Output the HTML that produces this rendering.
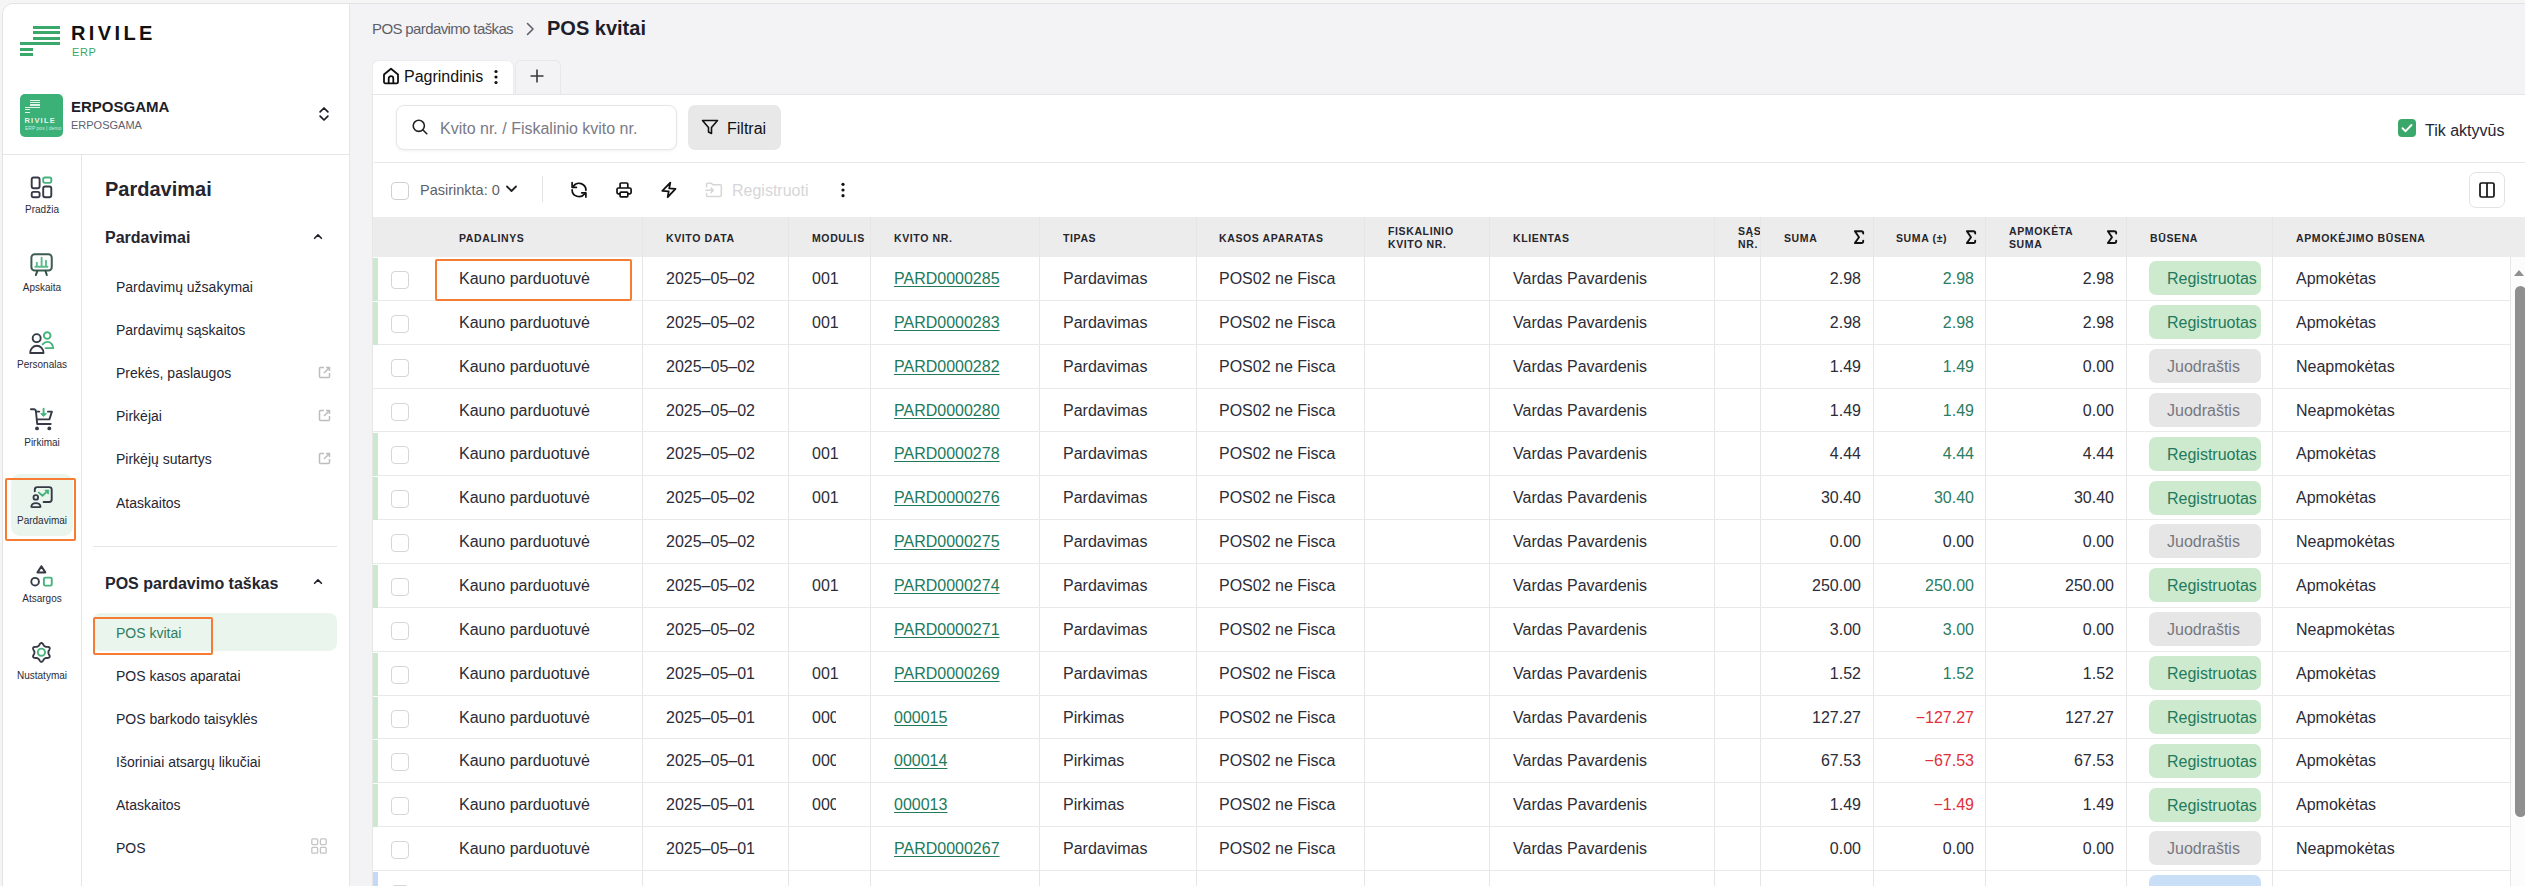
<!DOCTYPE html><html><head><meta charset="utf-8"><style>
*{box-sizing:border-box;margin:0;padding:0}
html,body{width:2525px;height:886px;overflow:hidden;background:#f5f5f5;font-family:"Liberation Sans", sans-serif;color:#2c2c37}
.a{position:absolute;white-space:nowrap}
#app{position:absolute;left:2px;top:3px;width:2600px;height:900px;border:1px solid #e3e3e3;border-top-left-radius:11px;background:#f3f3f6;overflow:hidden}
#side{position:absolute;left:3px;top:4px;width:347px;height:900px;background:#fff;border-right:1px solid #e6e6e6;border-top-left-radius:10px}
.st{position:absolute;background:#3aa86b;height:2.8px}
.rl{position:absolute;font-size:10px;color:#2b2b38;text-align:center;width:78px;left:3px;line-height:12px}
.ri{position:absolute;left:30px;width:23px;height:23px}
.sub{position:absolute;font-size:14px;color:#262633;left:116px;line-height:16px;white-space:nowrap}
.ext{position:absolute;left:318px;width:13px;height:13px}
.ob{position:absolute;border:2.8px solid #f67c34;border-radius:2px}
#card{position:absolute;left:372px;top:94px;width:2200px;height:800px;background:#fff;border-left:1px solid #e6e6e6;border-top:1px solid #e6e6e6}
.hd{position:absolute;font-size:10.5px;font-weight:bold;letter-spacing:0.62px;color:#26262c;line-height:13px;white-space:nowrap}
.vl{position:absolute;width:1px;background:#e6e6e6}
.hl{position:absolute;height:1px;background:#e9e9e9}
.c{position:absolute;font-size:16px;line-height:18px;white-space:nowrap;color:#2c2c37}
.r{text-align:right}
.lk{color:#217a5b;text-decoration:underline;text-underline-offset:2px}
.neg{color:#e0303a}
.pos{color:#2b7d62}
.cb{position:absolute;left:391px;width:18px;height:18px;border:1px solid #d6d6d6;border-radius:4px;background:#fff}
.bd{position:absolute;left:2149px;width:112px;height:34px;border-radius:7px;font-size:16px;line-height:35px;padding-left:18px;white-space:nowrap;overflow:hidden}
.bg{background:#cdeace;color:#23795b}
.bj{background:#e6e6e6;color:#777780}
.bb{background:#c9def7}
.ind{position:absolute;left:373px;width:5px}
.sig{position:absolute;font-size:17px;font-family:"Liberation Serif",serif;color:#1f1f28}
</style></head><body>
<div id="app"></div>
<div id="side"></div>
<div class="st" style="left:33px;top:26px;width:26.5px"></div>
<div class="st" style="left:33px;top:31.4px;width:26.5px"></div>
<div class="st" style="left:33px;top:36.9px;width:26.5px"></div>
<div class="st" style="left:20px;top:42.1px;width:39.5px"></div>
<div class="st" style="left:20px;top:47.9px;width:13px"></div>
<div class="st" style="left:20px;top:53px;width:13px"></div>
<div class="a" style="left:71px;top:22px;font-size:20px;font-weight:bold;letter-spacing:3.4px;color:#111;line-height:22px">RIVILE</div>
<div class="a" style="left:72px;top:46px;font-size:11px;letter-spacing:0.6px;color:#3aa86b;line-height:13px">ERP</div>
<div class="a" style="left:20px;top:94px;width:43px;height:43px;border-radius:5px;background:#3bb077"></div>
<div class="a" style="left:30.2px;top:100.1px;width:9.7px;height:1.2px;background:rgba(255,255,255,0.85)"></div>
<div class="a" style="left:30.2px;top:102.2px;width:9.7px;height:1.2px;background:rgba(255,255,255,0.85)"></div>
<div class="a" style="left:30.2px;top:104.4px;width:9.7px;height:1.2px;background:rgba(255,255,255,0.85)"></div>
<div class="a" style="left:25.3px;top:106.9px;width:14.6px;height:1.2px;background:rgba(255,255,255,0.85)"></div>
<div class="a" style="left:25.3px;top:109.2px;width:4.7px;height:1.2px;background:rgba(255,255,255,0.85)"></div>
<div class="a" style="left:25.3px;top:111.5px;width:4.7px;height:1.2px;background:rgba(255,255,255,0.85)"></div>
<div class="a" style="left:24.5px;top:115.5px;font-size:7.5px;font-weight:bold;letter-spacing:1.2px;color:rgba(255,255,255,0.9);line-height:9px">RIVILE</div>
<div class="a" style="left:25px;top:125px;font-size:5px;color:rgba(255,255,255,0.75);line-height:7px;letter-spacing:0px">ERP pos | demo</div>
<div class="a" style="left:71px;top:98px;font-size:15px;font-weight:bold;color:#1e1e28;line-height:17px">ERPOSGAMA</div>
<div class="a" style="left:71px;top:119px;font-size:11px;color:#5e5e6e;line-height:13px">ERPOSGAMA</div>
<svg class="a" style="left:318px;top:106px" width="12" height="16" viewBox="0 0 12 16"><path d="M2.1 5.9 L6 2 L9.9 5.9 M2.1 10.1 L6 14 L9.9 10.1" fill="none" stroke="#1c1c22" stroke-width="1.7" stroke-linecap="round" stroke-linejoin="round"/></svg>
<div class="a" style="left:3px;top:154px;width:346px;height:1px;background:#e6e6e6"></div>
<div class="a" style="left:81px;top:155px;width:1px;height:740px;background:#e6e6e6"></div>
<div class="rl" style="top:204.0px">Pradžia</div>
<div class="rl" style="top:281.7px">Apskaita</div>
<div class="rl" style="top:359.4px">Personalas</div>
<div class="rl" style="top:437.1px">Pirkimai</div>
<div class="a" style="left:11px;top:474px;width:62px;height:62px;border-radius:9px;background:#eaf5ee"></div>
<div class="rl" style="top:514.8px">Pardavimai</div>
<div class="rl" style="top:592.5px">Atsargos</div>
<div class="rl" style="top:670.2px">Nustatymai</div>
<svg class="a" style="left:26px;top:172px" width="30" height="30" viewBox="0 0 30 30"><rect x="5.7" y="5.5" width="7.9" height="10.8" rx="2" stroke="#363a46" stroke-width="1.9" fill="none"/><rect x="5.7" y="19.9" width="7.9" height="5.4" rx="1.8" stroke="#363a46" stroke-width="1.9" fill="none"/><rect x="17.2" y="5.5" width="8.1" height="5.4" rx="1.8" stroke="#45b37b" stroke-width="1.9" fill="none"/><rect x="17.2" y="14.5" width="8.1" height="10.8" rx="2" stroke="#363a46" stroke-width="1.9" fill="none"/></svg>
<svg class="a" style="left:26px;top:249px" width="30" height="30" viewBox="0 0 30 30"><rect x="5.4" y="5.2" width="20.35" height="16.3" rx="3.3" stroke="#3d5c50" stroke-width="2" fill="none"/><path d="M11.2 22.3 L9.9 26 M19.6 22.3 L20.8 26" stroke="#2f5244" stroke-width="2" stroke-linecap="round"/><path d="M10.8 17.6 V13.6 M15.6 17.6 V8.6 M20 17.6 V11.6 M9.3 17.7 H21.5" stroke="#5bbd8c" stroke-width="1.9" stroke-linecap="round" fill="none"/></svg>
<svg class="a" style="left:26px;top:328px" width="30" height="30" viewBox="0 0 30 30"><circle cx="10.67" cy="10.16" r="4" stroke="#363a46" stroke-width="1.9" fill="none"/><path d="M4.2 25 A6.65 7.2 0 0 1 17.5 25 Z" stroke="#363a46" stroke-width="1.9" fill="none" stroke-linejoin="round"/><circle cx="21.2" cy="7.6" r="3.3" stroke="#45b37b" stroke-width="1.9" fill="none"/><path d="M16.6 16.3 C18 14.6 19.8 13.9 21.3 13.9 C24.5 13.9 27.1 16.5 27.1 20.1 H19.6" stroke="#45b37b" stroke-width="1.9" fill="none" stroke-linecap="round"/></svg>
<svg class="a" style="left:26px;top:404px" width="30" height="30" viewBox="0 0 30 30"><path d="M4.9 5.25 H8.2 Q9.6 5.25 9.9 7 L11.2 20 H24.7" stroke="#363a46" stroke-width="1.9" fill="none" stroke-linecap="round" stroke-linejoin="round"/><path d="M10 7.6 H13.3 M21.9 7.6 H25.9 L23.4 15.4 H11" stroke="#363a46" stroke-width="1.9" fill="none" stroke-linecap="round" stroke-linejoin="round"/><circle cx="11" cy="24.4" r="1.9" fill="#363a46"/><circle cx="23.3" cy="24.4" r="1.9" fill="#363a46"/><path d="M17.6 4.8 V10" stroke="#45b37b" stroke-width="1.9" stroke-linecap="round"/><path d="M14.7 9.6 H20.6 L17.6 12.6 Z" fill="#45b37b" stroke="#45b37b" stroke-width="0.8" stroke-linejoin="round"/></svg>
<svg class="a" style="left:26px;top:482px" width="30" height="30" viewBox="0 0 30 30"><path d="M8.8 9.3 V7.6 A2.5 2.5 0 0 1 11.3 5.1 H23.2 A2.5 2.5 0 0 1 25.7 7.6 V17.5 A2.5 2.5 0 0 1 23.2 20 H17.6" stroke="#363a46" stroke-width="1.9" fill="none" stroke-linecap="round"/><circle cx="9.8" cy="15.4" r="2.3" stroke="#363a46" stroke-width="1.8" fill="none"/><path d="M5.9 25.1 H13.9 Q14.6 25.1 14.5 24.4 C14.1 22.2 12.2 21.2 9.9 21.2 C7.6 21.2 5.7 22.2 5.3 24.4 Q5.2 25.1 5.9 25.1 Z" stroke="#363a46" stroke-width="1.8" fill="none"/><path d="M12.9 10.6 L16.5 13.8 L20.6 9.9" stroke="#45b37b" stroke-width="1.9" stroke-linecap="round" stroke-linejoin="round" fill="none"/><path d="M18.9 8.1 H22.8 L22.3 12.2 Z" fill="#45b37b" stroke="#45b37b" stroke-width="0.8" stroke-linejoin="round"/></svg>
<svg class="a" style="left:26px;top:560px" width="30" height="30" viewBox="0 0 30 30"><path d="M15.4 6.2 L19.3 12.4 H11.5 Z" stroke="#363a46" stroke-width="2" fill="none" stroke-linejoin="round"/><circle cx="9.1" cy="21.7" r="3.8" stroke="#363a46" stroke-width="1.9" fill="none"/><rect x="17.9" y="17.6" width="7.85" height="8" rx="1.3" stroke="#45b37b" stroke-width="1.9" fill="none"/></svg>
<svg class="a" style="left:26px;top:637px" width="30" height="30" viewBox="0 0 30 30"><path d="M15.40 6.00 L15.73 6.04 L16.04 6.18 L16.35 6.39 L16.63 6.66 L16.89 6.97 L17.12 7.31 L17.33 7.65 L17.53 7.98 L17.71 8.28 L17.90 8.54 L18.08 8.76 L18.28 8.94 L18.48 9.09 L18.69 9.22 L18.90 9.34 L19.11 9.46 L19.33 9.58 L19.56 9.68 L19.81 9.76 L20.09 9.81 L20.41 9.84 L20.76 9.85 L21.14 9.85 L21.55 9.87 L21.96 9.90 L22.36 9.96 L22.73 10.07 L23.07 10.23 L23.34 10.44 L23.54 10.70 L23.67 11.01 L23.71 11.35 L23.68 11.71 L23.59 12.09 L23.44 12.47 L23.27 12.84 L23.08 13.20 L22.89 13.53 L22.72 13.84 L22.59 14.13 L22.49 14.40 L22.43 14.66 L22.40 14.91 L22.40 15.16 L22.40 15.40 L22.40 15.64 L22.40 15.89 L22.43 16.14 L22.49 16.40 L22.59 16.67 L22.72 16.96 L22.89 17.27 L23.08 17.60 L23.27 17.96 L23.44 18.33 L23.59 18.71 L23.68 19.09 L23.71 19.45 L23.67 19.79 L23.54 20.10 L23.34 20.36 L23.07 20.57 L22.73 20.73 L22.36 20.84 L21.96 20.90 L21.55 20.93 L21.14 20.95 L20.76 20.95 L20.41 20.96 L20.09 20.99 L19.81 21.04 L19.56 21.12 L19.33 21.22 L19.11 21.34 L18.90 21.46 L18.69 21.58 L18.48 21.71 L18.28 21.86 L18.08 22.04 L17.90 22.26 L17.71 22.52 L17.53 22.82 L17.33 23.15 L17.12 23.49 L16.89 23.83 L16.63 24.14 L16.35 24.41 L16.04 24.62 L15.73 24.76 L15.40 24.80 L15.07 24.76 L14.76 24.62 L14.45 24.41 L14.17 24.14 L13.91 23.83 L13.68 23.49 L13.47 23.15 L13.27 22.82 L13.09 22.52 L12.90 22.26 L12.72 22.04 L12.52 21.86 L12.32 21.71 L12.11 21.58 L11.90 21.46 L11.69 21.34 L11.47 21.22 L11.24 21.12 L10.99 21.04 L10.71 20.99 L10.39 20.96 L10.04 20.95 L9.66 20.95 L9.25 20.93 L8.84 20.90 L8.44 20.84 L8.07 20.73 L7.73 20.57 L7.46 20.36 L7.26 20.10 L7.13 19.79 L7.09 19.45 L7.12 19.09 L7.21 18.71 L7.36 18.33 L7.53 17.96 L7.72 17.60 L7.91 17.27 L8.08 16.96 L8.21 16.67 L8.31 16.40 L8.37 16.14 L8.40 15.89 L8.40 15.64 L8.40 15.40 L8.40 15.16 L8.40 14.91 L8.37 14.66 L8.31 14.40 L8.21 14.13 L8.08 13.84 L7.91 13.53 L7.72 13.20 L7.53 12.84 L7.36 12.47 L7.21 12.09 L7.12 11.71 L7.09 11.35 L7.13 11.01 L7.26 10.70 L7.46 10.44 L7.73 10.23 L8.07 10.07 L8.44 9.96 L8.84 9.90 L9.25 9.87 L9.66 9.85 L10.04 9.85 L10.39 9.84 L10.71 9.81 L10.99 9.76 L11.24 9.68 L11.47 9.58 L11.69 9.46 L11.90 9.34 L12.11 9.22 L12.32 9.09 L12.52 8.94 L12.72 8.76 L12.90 8.54 L13.09 8.28 L13.27 7.98 L13.47 7.65 L13.68 7.31 L13.91 6.97 L14.17 6.66 L14.45 6.39 L14.76 6.18 L15.07 6.04 L15.40 6.00 Z" stroke="#363a46" stroke-width="1.9" fill="none" stroke-linejoin="round"/><circle cx="15.4" cy="15.2" r="3.6" stroke="#45b37b" stroke-width="1.9" fill="none"/></svg>
<div class="ob" style="left:5px;top:478px;width:71px;height:63px"></div>
<div class="a" style="left:105px;top:178px;font-size:20px;font-weight:bold;color:#25252f;line-height:22px">Pardavimai</div>
<div class="a" style="left:105px;top:229px;font-size:16px;font-weight:bold;color:#25252f;line-height:18px">Pardavimai</div>
<svg class="a" style="left:313px;top:233px" width="10" height="7" viewBox="0 0 10 7"><path d="M1.6 5.3 L5 1.9 L8.4 5.3" fill="none" stroke="#1e1e28" stroke-width="1.6" stroke-linecap="round" stroke-linejoin="round"/></svg>
<div class="sub" style="top:279.09999999999997px">Pardavimų užsakymai</div>
<div class="sub" style="top:322.17999999999995px">Pardavimų sąskaitos</div>
<div class="sub" style="top:365.25999999999993px">Prekės, paslaugos</div>
<svg class="ext" style="top:366.05999999999995px" viewBox="0 0 13 13"><path d="M6 1.5 H2.5 A1 1 0 0 0 1.5 2.5 V10.5 A1 1 0 0 0 2.5 11.5 H10.5 A1 1 0 0 0 11.5 10.5 V7" fill="none" stroke="#bdbdbd" stroke-width="1.5"/><path d="M6 7 L11.5 1.5 M8 1.5 H11.5 V5" fill="none" stroke="#bdbdbd" stroke-width="1.5"/></svg>
<div class="sub" style="top:408.34px">Pirkėjai</div>
<svg class="ext" style="top:409.14px" viewBox="0 0 13 13"><path d="M6 1.5 H2.5 A1 1 0 0 0 1.5 2.5 V10.5 A1 1 0 0 0 2.5 11.5 H10.5 A1 1 0 0 0 11.5 10.5 V7" fill="none" stroke="#bdbdbd" stroke-width="1.5"/><path d="M6 7 L11.5 1.5 M8 1.5 H11.5 V5" fill="none" stroke="#bdbdbd" stroke-width="1.5"/></svg>
<div class="sub" style="top:451.41999999999996px">Pirkėjų sutartys</div>
<svg class="ext" style="top:452.21999999999997px" viewBox="0 0 13 13"><path d="M6 1.5 H2.5 A1 1 0 0 0 1.5 2.5 V10.5 A1 1 0 0 0 2.5 11.5 H10.5 A1 1 0 0 0 11.5 10.5 V7" fill="none" stroke="#bdbdbd" stroke-width="1.5"/><path d="M6 7 L11.5 1.5 M8 1.5 H11.5 V5" fill="none" stroke="#bdbdbd" stroke-width="1.5"/></svg>
<div class="sub" style="top:494.49999999999994px">Ataskaitos</div>
<div class="a" style="left:93px;top:546px;width:244px;height:1px;background:#e6e6e6"></div>
<div class="a" style="left:105px;top:575px;font-size:16px;font-weight:bold;color:#25252f;line-height:18px">POS pardavimo taškas</div>
<svg class="a" style="left:313px;top:578px" width="10" height="7" viewBox="0 0 10 7"><path d="M1.6 5.3 L5 1.9 L8.4 5.3" fill="none" stroke="#1e1e28" stroke-width="1.6" stroke-linecap="round" stroke-linejoin="round"/></svg>
<div class="a" style="left:93px;top:613px;width:244px;height:38px;border-radius:8px;background:#eaf5ee"></div>
<div class="sub" style="top:624.6px;color:#2e7d5e">POS kvitai</div>
<div class="sub" style="top:667.6px">POS kasos aparatai</div>
<div class="sub" style="top:710.6px">POS barkodo taisyklės</div>
<div class="sub" style="top:753.6px">Išoriniai atsargų likučiai</div>
<div class="sub" style="top:796.6px">Ataskaitos</div>
<div class="sub" style="top:839.6px">POS</div>
<svg class="a" style="left:311px;top:838px" width="16" height="16" viewBox="0 0 16 16"><g fill="none" stroke="#c4c4c4" stroke-width="1.3"><rect x="0.8" y="0.8" width="5.8" height="5.8" rx="1"/><rect x="9.4" y="0.8" width="5.8" height="5.8" rx="1"/><rect x="0.8" y="9.4" width="5.8" height="5.8" rx="1"/><rect x="9.4" y="9.4" width="5.8" height="5.8" rx="1"/></g></svg>
<div class="ob" style="left:93px;top:617px;width:120px;height:38px"></div>
<div class="a" style="left:372px;top:20px;font-size:15px;letter-spacing:-0.62px;color:#5f5f6a;line-height:17px">POS pardavimo taškas</div>
<svg class="a" style="left:525px;top:22px" width="10" height="14" viewBox="0 0 10 14"><path d="M2.5 1.5 L8 7 L2.5 12.5" fill="none" stroke="#5f5f6a" stroke-width="1.6" stroke-linecap="round" stroke-linejoin="round"/></svg>
<div class="a" style="left:547px;top:17px;font-size:20px;font-weight:bold;color:#1e1e28;line-height:23px">POS kvitai</div>
<div class="a" style="left:372px;top:60px;width:142px;height:35px;background:#fff;border-radius:7px 7px 0 0;border:1px solid #ececec;border-bottom:none"></div>
<div class="a" style="left:515px;top:60px;width:46px;height:35px;background:#f3f3f6;border-radius:6px 6px 0 0;border:1px solid #e8e8ea;border-bottom:none"></div>
<svg class="a" style="left:382px;top:67px" width="18" height="18" viewBox="0 0 18 18"><path d="M2 7.5 L9 1.8 L16 7.5 V15 A1.3 1.3 0 0 1 14.7 16.3 H3.3 A1.3 1.3 0 0 1 2 15 Z" fill="none" stroke="#111" stroke-width="1.8" stroke-linejoin="round"/><path d="M6.7 16.3 V11.5 A2.3 2.3 0 0 1 11.3 11.5 V16.3" fill="none" stroke="#111" stroke-width="1.8"/></svg>
<div class="a" style="left:404px;top:68px;font-size:16px;color:#111;line-height:18px">Pagrindinis</div>
<svg class="a" style="left:493px;top:69px" width="6" height="16" viewBox="0 0 6 16"><circle cx="3" cy="2.5" r="1.6" fill="#111"/><circle cx="3" cy="8" r="1.6" fill="#111"/><circle cx="3" cy="13.5" r="1.6" fill="#111"/></svg>
<svg class="a" style="left:530px;top:69px" width="14" height="14" viewBox="0 0 14 14"><path d="M7 0.5 V13.5 M0.5 7 H13.5" stroke="#3a3a3a" stroke-width="1.6"/></svg>
<div id="card"></div>
<div class="a" style="left:396px;top:105px;width:281px;height:45px;border:1px solid #e6e6e6;border-radius:8px;background:#fff;box-shadow:0 1px 3px rgba(0,0,0,0.06)"></div>
<svg class="a" style="left:412px;top:119px" width="16" height="16" viewBox="0 0 16 16"><circle cx="6.8" cy="6.8" r="5.6" fill="none" stroke="#222" stroke-width="1.6"/><path d="M11 11 L14.8 14.8" stroke="#222" stroke-width="1.6" stroke-linecap="round"/></svg>
<div class="a" style="left:440px;top:120px;font-size:16px;color:#7a7a86;line-height:18px">Kvito nr. / Fiskalinio kvito nr.</div>
<div class="a" style="left:688px;top:105px;width:93px;height:45px;border-radius:7px;background:#e8e8e8"></div>
<svg class="a" style="left:701px;top:119px" width="18" height="16" viewBox="0 0 18 16"><path d="M1.5 1.5 H16.5 L10.5 8.5 V14.5 L7.5 13 V8.5 Z" fill="none" stroke="#111" stroke-width="1.6" stroke-linejoin="round"/></svg>
<div class="a" style="left:727px;top:120px;font-size:16px;color:#111;line-height:18px">Filtrai</div>
<div class="a" style="left:2398px;top:119px;width:18px;height:18px;border-radius:4px;background:#3aa86b"></div>
<svg class="a" style="left:2398px;top:119px" width="18" height="18" viewBox="0 0 18 18"><path d="M4.5 9.2 L7.6 12.2 L13.5 6" fill="none" stroke="#fff" stroke-width="1.9" stroke-linecap="round" stroke-linejoin="round"/></svg>
<div class="a" style="left:2425px;top:122px;font-size:16px;color:#262633;line-height:18px">Tik aktyvūs</div>
<div class="a" style="left:374px;top:162px;width:2200px;height:1px;background:#e8e8e8"></div>
<div class="cb" style="top:182px;border-color:#d0d0d0"></div>
<div class="a" style="left:420px;top:182px;font-size:14.5px;color:#5f5f6a;line-height:17px">Pasirinkta: 0</div>
<svg class="a" style="left:505px;top:184px" width="13" height="10" viewBox="0 0 13 10"><path d="M2 2.5 L6.5 7 L11 2.5" fill="none" stroke="#222" stroke-width="1.8" stroke-linecap="round" stroke-linejoin="round"/></svg>
<div class="a" style="left:542px;top:176px;width:1px;height:26px;background:#e3e3e3"></div>
<svg class="a" style="left:570px;top:181px" width="18" height="18" viewBox="0 0 18 18"><path d="M3.4 5.2 A6.9 6.9 0 0 1 15.9 9.3 M2.1 8.9 A6.9 6.9 0 0 0 14.5 12.9" fill="none" stroke="#111" stroke-width="1.7" stroke-linecap="round"/><path d="M2.1 1.6 V6.3 H6.4 M11.7 11.8 H15.9 V16.1" fill="none" stroke="#111" stroke-width="1.7" stroke-linecap="round" stroke-linejoin="round"/></svg>
<svg class="a" style="left:615px;top:181px" width="18" height="18" viewBox="0 0 18 18"><path d="M5.1 7 V3 A1 1 0 0 1 6.1 2 H11.8 A1 1 0 0 1 12.8 3 V7" fill="none" stroke="#111" stroke-width="1.7"/><path d="M5.1 12.8 H3.5 A1.5 1.5 0 0 1 2 11.3 V8.5 A1.5 1.5 0 0 1 3.5 7 H14.6 A1.5 1.5 0 0 1 16.1 8.5 V11.3 A1.5 1.5 0 0 1 14.6 12.8 H12.8" fill="none" stroke="#111" stroke-width="1.7" stroke-linejoin="round"/><rect x="5.1" y="11.1" width="7.7" height="4.8" rx="0.8" fill="none" stroke="#111" stroke-width="1.7"/></svg>
<svg class="a" style="left:660px;top:181px" width="18" height="18" viewBox="0 0 18 18"><path d="M10.3 1.6 L9.2 7.3 L15.5 7.8 L7.7 16.2 L8.7 10.3 L2.3 9.8 Z" fill="none" stroke="#111" stroke-width="1.8" stroke-linejoin="round"/></svg>
<svg class="a" style="left:705px;top:182px" width="18" height="16" viewBox="0 0 18 16"><path d="M1.6 5.5 V2.2 A1 1 0 0 1 2.6 1.2 H6.3 L7.8 2.8 H15.3 A1 1 0 0 1 16.3 3.8 V13.6 A1 1 0 0 1 15.3 14.6 H2.6 A1 1 0 0 1 1.6 13.6 V11" fill="none" stroke="#d6d6d6" stroke-width="1.5"/><path d="M1 8.3 H8.3 M6 6 L8.3 8.3 L6 10.6" fill="none" stroke="#d6d6d6" stroke-width="1.5" stroke-linecap="round" stroke-linejoin="round"/></svg>
<div class="a" style="left:732px;top:182px;font-size:16px;color:#d6d6d8;line-height:18px">Registruoti</div>
<svg class="a" style="left:840px;top:182px" width="6" height="16" viewBox="0 0 6 16"><circle cx="3" cy="2.3" r="1.6" fill="#111"/><circle cx="3" cy="8" r="1.6" fill="#111"/><circle cx="3" cy="13.7" r="1.6" fill="#111"/></svg>
<div class="a" style="left:2469px;top:172px;width:36px;height:36px;border:1px solid #e3e3e3;border-radius:7px;background:#fff"></div>
<svg class="a" style="left:2479px;top:182px" width="16" height="16" viewBox="0 0 16 16"><rect x="1" y="1" width="14" height="14" rx="1.5" fill="none" stroke="#111" stroke-width="1.7"/><path d="M8 1 V15" stroke="#111" stroke-width="1.7"/></svg>
<div class="a" style="left:373px;top:217px;width:2200px;height:40px;background:#ececec"></div>
<div class="vl" style="left:642px;top:217px;height:700px"></div>
<div class="vl" style="left:788px;top:217px;height:700px"></div>
<div class="vl" style="left:870px;top:217px;height:700px"></div>
<div class="vl" style="left:1039px;top:217px;height:700px"></div>
<div class="vl" style="left:1196px;top:217px;height:700px"></div>
<div class="vl" style="left:1364px;top:217px;height:700px"></div>
<div class="vl" style="left:1489px;top:217px;height:700px"></div>
<div class="vl" style="left:1714px;top:217px;height:700px"></div>
<div class="vl" style="left:1760px;top:217px;height:700px"></div>
<div class="vl" style="left:1873px;top:217px;height:700px"></div>
<div class="vl" style="left:1985px;top:217px;height:700px"></div>
<div class="vl" style="left:2126px;top:217px;height:700px"></div>
<div class="vl" style="left:2272px;top:217px;height:700px"></div>
<div class="vl" style="left:2510px;top:257px;height:700px"></div>
<div class="hd" style="left:459px;top:232px">PADALINYS</div>
<div class="hd" style="left:666px;top:232px">KVITO DATA</div>
<div class="hd" style="left:812px;top:232px">MODULIS</div>
<div class="hd" style="left:894px;top:232px">KVITO NR.</div>
<div class="hd" style="left:1063px;top:232px">TIPAS</div>
<div class="hd" style="left:1219px;top:232px">KASOS APARATAS</div>
<div class="hd" style="left:1388px;top:225px;line-height:13px">FISKALINIO<br>KVITO NR.</div>
<div class="hd" style="left:1513px;top:232px">KLIENTAS</div>
<div class="a" style="left:1715px;top:225px;width:45px;height:30px;overflow:hidden"><div class="hd" style="left:23px;top:0px;text-align:left">SĄS<br>NR.</div></div>
<div class="hd" style="left:1784px;top:232px">SUMA</div>
<div class="hd" style="left:1896px;top:232px">SUMA (±)</div>
<div class="hd" style="left:2009px;top:225px">APMOKĖTA<br>SUMA</div>
<div class="hd" style="left:2150px;top:232px">BŪSENA</div>
<div class="hd" style="left:2296px;top:232px">APMOKĖJIMO BŪSENA</div>
<svg class="a" style="left:1853px;top:229.5px" width="12" height="15" viewBox="0 0 12 15"><path d="M10.2 3.6 V3 Q10.2 1.2 8.4 1.2 H1.9 L6 7.2 L1.9 13 H8.4 Q10.2 13 10.2 11.2 V10.6" fill="none" stroke="#111" stroke-width="1.9" stroke-linecap="round" stroke-linejoin="round"/></svg>
<svg class="a" style="left:1965px;top:229.5px" width="12" height="15" viewBox="0 0 12 15"><path d="M10.2 3.6 V3 Q10.2 1.2 8.4 1.2 H1.9 L6 7.2 L1.9 13 H8.4 Q10.2 13 10.2 11.2 V10.6" fill="none" stroke="#111" stroke-width="1.9" stroke-linecap="round" stroke-linejoin="round"/></svg>
<svg class="a" style="left:2106px;top:229.5px" width="12" height="15" viewBox="0 0 12 15"><path d="M10.2 3.6 V3 Q10.2 1.2 8.4 1.2 H1.9 L6 7.2 L1.9 13 H8.4 Q10.2 13 10.2 11.2 V10.6" fill="none" stroke="#111" stroke-width="1.9" stroke-linecap="round" stroke-linejoin="round"/></svg>
<div class="hl" style="left:373px;top:299.86px;width:2137px"></div>
<div class="ind" style="top:258.00px;height:42.86px;background:#cce9cf"></div>
<div class="cb" style="top:270.93px"></div>
<div class="c" style="left:459px;top:269.93px">Kauno parduotuvė</div>
<div class="c" style="left:666px;top:269.93px">2025–05–02</div>
<div class="c" style="left:812px;top:269.93px">001</div>
<div class="c lk" style="left:894px;top:269.93px">PARD0000285</div>
<div class="c" style="left:1063px;top:269.93px">Pardavimas</div>
<div class="c" style="left:1219px;top:269.93px">POS02 ne Fisca</div>
<div class="c" style="left:1513px;top:269.93px">Vardas Pavardenis</div>
<div class="c r" style="left:1761px;width:100px;top:269.93px">2.98</div>
<div class="c r pos" style="left:1874px;width:100px;top:269.93px">2.98</div>
<div class="c r" style="left:2014px;width:100px;top:269.93px">2.98</div>
<div class="c" style="left:2296px;top:269.93px">Apmokėtas</div>
<div class="bd bg" style="top:261.20px">Registruotas</div>
<div class="hl" style="left:373px;top:343.72px;width:2137px"></div>
<div class="ind" style="top:301.86px;height:42.86px;background:#cce9cf"></div>
<div class="cb" style="top:314.79px"></div>
<div class="c" style="left:459px;top:313.79px">Kauno parduotuvė</div>
<div class="c" style="left:666px;top:313.79px">2025–05–02</div>
<div class="c" style="left:812px;top:313.79px">001</div>
<div class="c lk" style="left:894px;top:313.79px">PARD0000283</div>
<div class="c" style="left:1063px;top:313.79px">Pardavimas</div>
<div class="c" style="left:1219px;top:313.79px">POS02 ne Fisca</div>
<div class="c" style="left:1513px;top:313.79px">Vardas Pavardenis</div>
<div class="c r" style="left:1761px;width:100px;top:313.79px">2.98</div>
<div class="c r pos" style="left:1874px;width:100px;top:313.79px">2.98</div>
<div class="c r" style="left:2014px;width:100px;top:313.79px">2.98</div>
<div class="c" style="left:2296px;top:313.79px">Apmokėtas</div>
<div class="bd bg" style="top:305.06px">Registruotas</div>
<div class="hl" style="left:373px;top:387.58px;width:2137px"></div>
<div class="cb" style="top:358.65px"></div>
<div class="c" style="left:459px;top:357.65px">Kauno parduotuvė</div>
<div class="c" style="left:666px;top:357.65px">2025–05–02</div>
<div class="c lk" style="left:894px;top:357.65px">PARD0000282</div>
<div class="c" style="left:1063px;top:357.65px">Pardavimas</div>
<div class="c" style="left:1219px;top:357.65px">POS02 ne Fisca</div>
<div class="c" style="left:1513px;top:357.65px">Vardas Pavardenis</div>
<div class="c r" style="left:1761px;width:100px;top:357.65px">1.49</div>
<div class="c r pos" style="left:1874px;width:100px;top:357.65px">1.49</div>
<div class="c r" style="left:2014px;width:100px;top:357.65px">0.00</div>
<div class="c" style="left:2296px;top:357.65px">Neapmokėtas</div>
<div class="bd bj" style="top:348.92px">Juodraštis</div>
<div class="hl" style="left:373px;top:431.44px;width:2137px"></div>
<div class="cb" style="top:402.51px"></div>
<div class="c" style="left:459px;top:401.51px">Kauno parduotuvė</div>
<div class="c" style="left:666px;top:401.51px">2025–05–02</div>
<div class="c lk" style="left:894px;top:401.51px">PARD0000280</div>
<div class="c" style="left:1063px;top:401.51px">Pardavimas</div>
<div class="c" style="left:1219px;top:401.51px">POS02 ne Fisca</div>
<div class="c" style="left:1513px;top:401.51px">Vardas Pavardenis</div>
<div class="c r" style="left:1761px;width:100px;top:401.51px">1.49</div>
<div class="c r pos" style="left:1874px;width:100px;top:401.51px">1.49</div>
<div class="c r" style="left:2014px;width:100px;top:401.51px">0.00</div>
<div class="c" style="left:2296px;top:401.51px">Neapmokėtas</div>
<div class="bd bj" style="top:392.78px">Juodraštis</div>
<div class="hl" style="left:373px;top:475.30px;width:2137px"></div>
<div class="ind" style="top:433.44px;height:42.86px;background:#cce9cf"></div>
<div class="cb" style="top:446.37px"></div>
<div class="c" style="left:459px;top:445.37px">Kauno parduotuvė</div>
<div class="c" style="left:666px;top:445.37px">2025–05–02</div>
<div class="c" style="left:812px;top:445.37px">001</div>
<div class="c lk" style="left:894px;top:445.37px">PARD0000278</div>
<div class="c" style="left:1063px;top:445.37px">Pardavimas</div>
<div class="c" style="left:1219px;top:445.37px">POS02 ne Fisca</div>
<div class="c" style="left:1513px;top:445.37px">Vardas Pavardenis</div>
<div class="c r" style="left:1761px;width:100px;top:445.37px">4.44</div>
<div class="c r pos" style="left:1874px;width:100px;top:445.37px">4.44</div>
<div class="c r" style="left:2014px;width:100px;top:445.37px">4.44</div>
<div class="c" style="left:2296px;top:445.37px">Apmokėtas</div>
<div class="bd bg" style="top:436.64px">Registruotas</div>
<div class="hl" style="left:373px;top:519.16px;width:2137px"></div>
<div class="ind" style="top:477.30px;height:42.86px;background:#cce9cf"></div>
<div class="cb" style="top:490.23px"></div>
<div class="c" style="left:459px;top:489.23px">Kauno parduotuvė</div>
<div class="c" style="left:666px;top:489.23px">2025–05–02</div>
<div class="c" style="left:812px;top:489.23px">001</div>
<div class="c lk" style="left:894px;top:489.23px">PARD0000276</div>
<div class="c" style="left:1063px;top:489.23px">Pardavimas</div>
<div class="c" style="left:1219px;top:489.23px">POS02 ne Fisca</div>
<div class="c" style="left:1513px;top:489.23px">Vardas Pavardenis</div>
<div class="c r" style="left:1761px;width:100px;top:489.23px">30.40</div>
<div class="c r pos" style="left:1874px;width:100px;top:489.23px">30.40</div>
<div class="c r" style="left:2014px;width:100px;top:489.23px">30.40</div>
<div class="c" style="left:2296px;top:489.23px">Apmokėtas</div>
<div class="bd bg" style="top:480.50px">Registruotas</div>
<div class="hl" style="left:373px;top:563.02px;width:2137px"></div>
<div class="cb" style="top:534.09px"></div>
<div class="c" style="left:459px;top:533.09px">Kauno parduotuvė</div>
<div class="c" style="left:666px;top:533.09px">2025–05–02</div>
<div class="c lk" style="left:894px;top:533.09px">PARD0000275</div>
<div class="c" style="left:1063px;top:533.09px">Pardavimas</div>
<div class="c" style="left:1219px;top:533.09px">POS02 ne Fisca</div>
<div class="c" style="left:1513px;top:533.09px">Vardas Pavardenis</div>
<div class="c r" style="left:1761px;width:100px;top:533.09px">0.00</div>
<div class="c r " style="left:1874px;width:100px;top:533.09px">0.00</div>
<div class="c r" style="left:2014px;width:100px;top:533.09px">0.00</div>
<div class="c" style="left:2296px;top:533.09px">Neapmokėtas</div>
<div class="bd bj" style="top:524.36px">Juodraštis</div>
<div class="hl" style="left:373px;top:606.88px;width:2137px"></div>
<div class="ind" style="top:565.02px;height:42.86px;background:#cce9cf"></div>
<div class="cb" style="top:577.95px"></div>
<div class="c" style="left:459px;top:576.95px">Kauno parduotuvė</div>
<div class="c" style="left:666px;top:576.95px">2025–05–02</div>
<div class="c" style="left:812px;top:576.95px">001</div>
<div class="c lk" style="left:894px;top:576.95px">PARD0000274</div>
<div class="c" style="left:1063px;top:576.95px">Pardavimas</div>
<div class="c" style="left:1219px;top:576.95px">POS02 ne Fisca</div>
<div class="c" style="left:1513px;top:576.95px">Vardas Pavardenis</div>
<div class="c r" style="left:1761px;width:100px;top:576.95px">250.00</div>
<div class="c r pos" style="left:1874px;width:100px;top:576.95px">250.00</div>
<div class="c r" style="left:2014px;width:100px;top:576.95px">250.00</div>
<div class="c" style="left:2296px;top:576.95px">Apmokėtas</div>
<div class="bd bg" style="top:568.22px">Registruotas</div>
<div class="hl" style="left:373px;top:650.74px;width:2137px"></div>
<div class="cb" style="top:621.81px"></div>
<div class="c" style="left:459px;top:620.81px">Kauno parduotuvė</div>
<div class="c" style="left:666px;top:620.81px">2025–05–02</div>
<div class="c lk" style="left:894px;top:620.81px">PARD0000271</div>
<div class="c" style="left:1063px;top:620.81px">Pardavimas</div>
<div class="c" style="left:1219px;top:620.81px">POS02 ne Fisca</div>
<div class="c" style="left:1513px;top:620.81px">Vardas Pavardenis</div>
<div class="c r" style="left:1761px;width:100px;top:620.81px">3.00</div>
<div class="c r pos" style="left:1874px;width:100px;top:620.81px">3.00</div>
<div class="c r" style="left:2014px;width:100px;top:620.81px">0.00</div>
<div class="c" style="left:2296px;top:620.81px">Neapmokėtas</div>
<div class="bd bj" style="top:612.08px">Juodraštis</div>
<div class="hl" style="left:373px;top:694.60px;width:2137px"></div>
<div class="ind" style="top:652.74px;height:42.86px;background:#cce9cf"></div>
<div class="cb" style="top:665.67px"></div>
<div class="c" style="left:459px;top:664.67px">Kauno parduotuvė</div>
<div class="c" style="left:666px;top:664.67px">2025–05–01</div>
<div class="c" style="left:812px;top:664.67px">001</div>
<div class="c lk" style="left:894px;top:664.67px">PARD0000269</div>
<div class="c" style="left:1063px;top:664.67px">Pardavimas</div>
<div class="c" style="left:1219px;top:664.67px">POS02 ne Fisca</div>
<div class="c" style="left:1513px;top:664.67px">Vardas Pavardenis</div>
<div class="c r" style="left:1761px;width:100px;top:664.67px">1.52</div>
<div class="c r pos" style="left:1874px;width:100px;top:664.67px">1.52</div>
<div class="c r" style="left:2014px;width:100px;top:664.67px">1.52</div>
<div class="c" style="left:2296px;top:664.67px">Apmokėtas</div>
<div class="bd bg" style="top:655.94px">Registruotas</div>
<div class="hl" style="left:373px;top:738.46px;width:2137px"></div>
<div class="ind" style="top:696.60px;height:42.86px;background:#cce9cf"></div>
<div class="cb" style="top:709.53px"></div>
<div class="c" style="left:459px;top:708.53px">Kauno parduotuvė</div>
<div class="c" style="left:666px;top:708.53px">2025–05–01</div>
<div class="c" style="left:812px;top:708.53px;width:23.8px;overflow:hidden">000</div>
<div class="c lk" style="left:894px;top:708.53px">000015</div>
<div class="c" style="left:1063px;top:708.53px">Pirkimas</div>
<div class="c" style="left:1219px;top:708.53px">POS02 ne Fisca</div>
<div class="c" style="left:1513px;top:708.53px">Vardas Pavardenis</div>
<div class="c r" style="left:1761px;width:100px;top:708.53px">127.27</div>
<div class="c r neg" style="left:1874px;width:100px;top:708.53px">−127.27</div>
<div class="c r" style="left:2014px;width:100px;top:708.53px">127.27</div>
<div class="c" style="left:2296px;top:708.53px">Apmokėtas</div>
<div class="bd bg" style="top:699.80px">Registruotas</div>
<div class="hl" style="left:373px;top:782.32px;width:2137px"></div>
<div class="ind" style="top:740.46px;height:42.86px;background:#cce9cf"></div>
<div class="cb" style="top:753.39px"></div>
<div class="c" style="left:459px;top:752.39px">Kauno parduotuvė</div>
<div class="c" style="left:666px;top:752.39px">2025–05–01</div>
<div class="c" style="left:812px;top:752.39px;width:23.8px;overflow:hidden">000</div>
<div class="c lk" style="left:894px;top:752.39px">000014</div>
<div class="c" style="left:1063px;top:752.39px">Pirkimas</div>
<div class="c" style="left:1219px;top:752.39px">POS02 ne Fisca</div>
<div class="c" style="left:1513px;top:752.39px">Vardas Pavardenis</div>
<div class="c r" style="left:1761px;width:100px;top:752.39px">67.53</div>
<div class="c r neg" style="left:1874px;width:100px;top:752.39px">−67.53</div>
<div class="c r" style="left:2014px;width:100px;top:752.39px">67.53</div>
<div class="c" style="left:2296px;top:752.39px">Apmokėtas</div>
<div class="bd bg" style="top:743.66px">Registruotas</div>
<div class="hl" style="left:373px;top:826.18px;width:2137px"></div>
<div class="ind" style="top:784.32px;height:42.86px;background:#cce9cf"></div>
<div class="cb" style="top:797.25px"></div>
<div class="c" style="left:459px;top:796.25px">Kauno parduotuvė</div>
<div class="c" style="left:666px;top:796.25px">2025–05–01</div>
<div class="c" style="left:812px;top:796.25px;width:23.8px;overflow:hidden">000</div>
<div class="c lk" style="left:894px;top:796.25px">000013</div>
<div class="c" style="left:1063px;top:796.25px">Pirkimas</div>
<div class="c" style="left:1219px;top:796.25px">POS02 ne Fisca</div>
<div class="c" style="left:1513px;top:796.25px">Vardas Pavardenis</div>
<div class="c r" style="left:1761px;width:100px;top:796.25px">1.49</div>
<div class="c r neg" style="left:1874px;width:100px;top:796.25px">−1.49</div>
<div class="c r" style="left:2014px;width:100px;top:796.25px">1.49</div>
<div class="c" style="left:2296px;top:796.25px">Apmokėtas</div>
<div class="bd bg" style="top:787.52px">Registruotas</div>
<div class="hl" style="left:373px;top:870.04px;width:2137px"></div>
<div class="cb" style="top:841.11px"></div>
<div class="c" style="left:459px;top:840.11px">Kauno parduotuvė</div>
<div class="c" style="left:666px;top:840.11px">2025–05–01</div>
<div class="c lk" style="left:894px;top:840.11px">PARD0000267</div>
<div class="c" style="left:1063px;top:840.11px">Pardavimas</div>
<div class="c" style="left:1219px;top:840.11px">POS02 ne Fisca</div>
<div class="c" style="left:1513px;top:840.11px">Vardas Pavardenis</div>
<div class="c r" style="left:1761px;width:100px;top:840.11px">0.00</div>
<div class="c r " style="left:1874px;width:100px;top:840.11px">0.00</div>
<div class="c r" style="left:2014px;width:100px;top:840.11px">0.00</div>
<div class="c" style="left:2296px;top:840.11px">Neapmokėtas</div>
<div class="bd bj" style="top:831.38px">Juodraštis</div>
<div class="hl" style="left:373px;top:913.90px;width:2137px"></div>
<div class="ind" style="top:872.04px;height:42.86px;background:#c5d9f5"></div>
<div class="cb" style="top:884.97px"></div>
<div class="bd bb" style="top:875.24px"></div>
<div class="ob" style="left:435px;top:259px;width:197px;height:42px"></div>
<div class="a" style="left:2511px;top:257px;width:20px;height:640px;background:#fcfcfc"></div>
<svg class="a" style="left:2513px;top:268px" width="12" height="9" viewBox="0 0 12 9"><path d="M1 8 L6 2 L11 8 Z" fill="#8f8f8f"/></svg>
<div class="a" style="left:2515.3px;top:285.5px;width:11px;height:531px;border-radius:5.5px;background:#8f8f8f"></div>
</body></html>
